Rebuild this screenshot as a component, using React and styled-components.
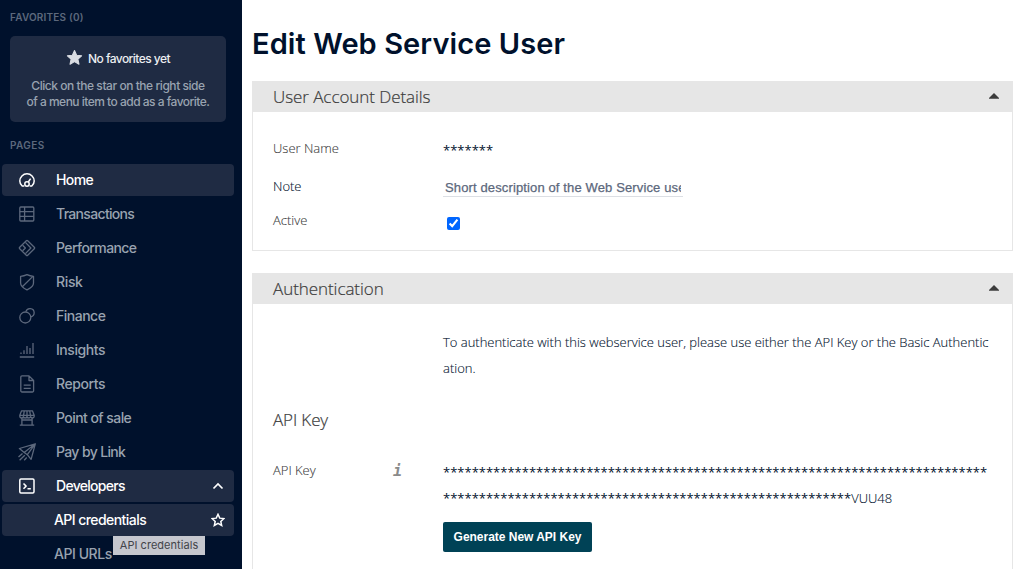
import React from "react";
import styled, { createGlobalStyle } from "styled-components";

const Global = createGlobalStyle`
  *, *::before, *::after { box-sizing: border-box; }
  body { margin: 0; background: #fff; overflow: hidden; }
`;

const Page = styled.div`
  display: flex;
  width: 1027px;
  height: 569px;
  overflow: hidden;
  font-family: "Open Sans", "Noto Sans", sans-serif;
`;

const Sidebar = styled.aside`
  flex: none;
  width: 242px;
  height: 569px;
  padding-top: 11px;
  overflow: hidden;
  background: #00112c;
  font-family: Inter, Roboto, sans-serif;
`;

const Caption = styled.h2`
  margin: 0;
  padding-left: 10px;
  height: 12px;
  line-height: 13px;
  font-size: 10px;
  font-weight: 600;
  letter-spacing: ${(p) => p.$tracking}px;
  color: #5c687c;
`;

const Favorites = styled.section`
  display: flex;
  flex-direction: column;
  align-items: center;
  width: 216px;
  height: 86px;
  margin: 13px 0 17px 10px;
  padding-top: 13px;
  border-radius: 5px;
  background: #1f2b43;
`;

const FavoritesTitle = styled.div`
  display: flex;
  align-items: center;
  gap: 5px;
  height: 20px;
  margin-bottom: 9px;
  font-size: 12px;
  font-weight: 550;
  line-height: 20px;
  letter-spacing: -0.55px;
  color: #eceef1;
  svg { margin-top: -4px; }
`;

const FavoritesHint = styled.p`
  margin: 0;
  line-height: 16px;
  font-size: 12px;
  font-weight: 450;
  text-align: center;
  white-space: nowrap;
  letter-spacing: ${(p) => p.$tracking}px;
  color: #99a3b0;
`;

const Nav = styled.nav`
  display: flex;
  flex-direction: column;
  gap: 2px;
  padding: 13px 8px 0 2px;
`;

const NavItem = styled.a`
  position: relative;
  flex: none;
  display: flex;
  align-items: center;
  height: 32px;
  padding-left: ${(p) => (p.$child ? "52px" : "15px")};
  padding-right: 8px;
  border-radius: 4px;
  background: ${(p) => (p.$active ? "#1f2b43" : "transparent")};
  color: ${(p) => (p.$active ? "#ffffff" : "#99a3b0")};
`;

const NavIcon = styled.svg`
  flex: none;
  width: 20px;
  height: 20px;
  margin-right: 19px;
  fill: none;
  stroke: ${(p) => (p.$active ? "#ffffff" : "#5c687c")};
  stroke-width: ${(p) => (p.$active ? 1.5 : 1.3)};
  stroke-linejoin: round;
`;

const NavLabel = styled.span`
  flex: 1;
  font-size: 14px;
  line-height: 20px;
  white-space: nowrap;
  font-weight: ${(p) => (p.$active ? 550 : 460)};
  letter-spacing: ${(p) => p.$tracking}px;
`;

const RowAction = styled.svg`
  flex: none;
  width: ${(p) => p.$size || 16}px;
  height: ${(p) => p.$size || 16}px;
  margin-right: ${(p) => (16 - (p.$size || 16)) / 2}px;
  fill: none;
  stroke: #fff;
  stroke-width: 1.7;
`;

const Tooltip = styled.span`
  position: absolute;
  left: 111px;
  top: 32px;
  z-index: 1;
  width: 92px;
  height: 19px;
  line-height: 19px;
  text-align: center;
  font-size: 11px;
  letter-spacing: 0.04px;
  white-space: nowrap;
  color: #424449;
  background: #c5c7ce;
`;

const Main = styled.main`
  flex: 1;
  padding: 26px 14px 0 10px;
`;

const Title = styled.h1`
  margin: 0 0 19px;
  height: 36px;
  line-height: 36px;
  font-family: Inter, sans-serif;
  font-size: 29px;
  font-weight: 600;
  letter-spacing: 0.08px;
  white-space: nowrap;
  color: #00112c;
`;

const Panel = styled.section`
  height: ${(p) => p.$height}px;
  margin-bottom: 22px;
  border: 1px solid #e6e6e6;
  border-top: 0;
`;

const PanelHeader = styled.header`
  display: flex;
  align-items: center;
  justify-content: space-between;
  height: 31px;
  margin: 0 -1px;
  padding: 0 14px 0 21px;
  background: #e6e6e6;
`;

const PanelTitle = styled.h2`
  margin: 0;
  font-size: 17px;
  line-height: 31px;
  font-weight: 300;
  letter-spacing: -0.06px;
  -webkit-text-stroke: 0.2px #3c3c3c;
  color: #3c3c3c;
`;

const Caret = styled.svg`
  width: 10px;
  height: 6px;
  margin-top: -2px;
  fill: #3c3c3c;
`;

const SubTitle = styled.h3`
  margin: 0;
  padding: 27px 0 0 20px;
  font-size: 17px;
  line-height: 24px;
  font-weight: 300;
  letter-spacing: -0.12px;
  -webkit-text-stroke: 0.2px #3c3c3c;
  color: #3c3c3c;
`;

const Field = styled.div`
  display: grid;
  grid-template-columns: 120px 50px 546px;
  padding: ${(p) => p.$top}px 0 0 20px;
`;

const Label = styled.label`
  font-size: 13px;
  line-height: 26px;
  font-weight: 300;
  -webkit-text-stroke: 0.1px currentColor;
  color: ${(p) => (p.$dark ? "#00112c" : "#3c3c3c")};
`;

const Value = styled.div`
  grid-column: 3;
  padding-top: ${(p) => (p.$masked ? 2 : 0)}px;
  height: ${(p) => p.$lines * 26}px;
  font-size: 13px;
  line-height: 26px;
  font-weight: ${(p) => (p.$masked ? 400 : 300)};
  letter-spacing: ${(p) => (p.$masked ? 0 : -0.012)}px;
  -webkit-text-stroke: ${(p) => (p.$masked ? 0 : 0.1)}px #00112c;
  white-space: nowrap;
  color: #00112c;
`;

const KeyTail = styled.span`
  font-weight: 300;
  -webkit-text-stroke: 0.1px #00112c;
`;

const NoteInput = styled.input`
  grid-column: 3;
  width: 240px;
  height: 20px;
  margin-top: 4px;
  padding: 2px 2px 1px;
  border: 0;
  border-bottom: 1px solid #dcdfe4;
  outline: 0;
  background: transparent;
  font: 13px "Liberation Sans", Arial, sans-serif;
  -webkit-text-stroke: 0.25px #5c687c;
  letter-spacing: 0.13px;
  color: #5c687c;
  &::placeholder { color: #5c687c; opacity: 1; }
`;

const Check = styled.input`
  grid-column: 3;
  width: 13px;
  height: 13px;
  margin: 10px 0 0 4px;
  accent-color: #0066ff;
`;

const Info = styled.span`
  grid-column: 2;
  padding-top: 1px;
  font: italic bold 15px/26px "DejaVu Sans Mono", monospace;
  color: #8a8a8a;
`;

const Button = styled.button`
  grid-column: 3;
  width: 149px;
  height: 30px;
  padding: 0;
  border: 0;
  border-radius: 2px;
  background: #004256;
  color: #fff;
  font: bold 12px "Liberation Sans", Arial, sans-serif;
  letter-spacing: -0.02px;
`;

const icons = {
  home: (
    <>
      <path d="M7.300 16H5.200C3.700 14.700 2.800 13 2.800 11a7.200 7.200 0 0 1 14.400 0c0 2-.9 3.700-2.400 5h-2.100" />
      <circle cx="10" cy="14" r="2.200" />
      <path d="M11.300 12 13.600 8.600" />
    </>
  ),
  transactions: (
    <>
      <rect x="2.800" y="3" width="14" height="14" rx="1" />
      <path d="M2.800 7.600h14M2.800 12.400h14M7.600 3v14" />
    </>
  ),
  performance: (
    <>
      <path d="M9.300 2.700a1 1 0 0 1 1.400 0l6.600 6.600a1 1 0 0 1 0 1.400l-6.600 6.600a1 1 0 0 1-1.400 0l-6.600-6.600a1 1 0 0 1 0-1.400z" />
      <path d="m8.400 4.400 5.500 5.600-5.500 5.600M5.600 7.200 8.400 10l-2.800 2.800" />
    </>
  ),
  risk: (
    <>
      <path d="M3.600 4.300Q7 4 10 2.600q3 1.400 6.500 1.700V11c0 3.200-3 5.300-6.500 6.900-3.500-1.600-6.400-3.700-6.400-6.900z" />
      <path d="M5.300 14.800 15.900 4.400" />
    </>
  ),
  finance: (
    <>
      <circle cx="8.300" cy="11.500" r="5.500" />
      <path d="M8.900 5.700a4.200 4.200 0 1 1 4.900 5.200" />
    </>
  ),
  insights: (
    <path d="M2.800 17h14.400M4 14v-1.500M7 14v-3.800M10 14V6M13 14V8M16 14V3" />
  ),
  reports: (
    <>
      <path d="M12 1.900H5a1.200 1.200 0 0 0-1.200 1.200v13.700A1.200 1.200 0 0 0 5 18h10.400a1.200 1.200 0 0 0 1.200-1.200V6.500zM12 1.900v4.600h4.600" />
      <path d="M6.700 11.200h7M6.700 14.300h7" />
    </>
  ),
  sale: (
    <>
      <path d="M4.600 2.800h10.800l1.800 4.400v1a1.800 1.800 0 0 1-3.600 0 1.800 1.800 0 0 1-3.600 0 1.800 1.800 0 0 1-3.600 0 1.800 1.800 0 0 1-3.600 0v-1zM2.800 7.300h14.400M7.300 2.800 6.400 8.200M12.700 2.800l.9 5.400M10 2.800v5.400" />
      <path d="M4.900 10v7M15.100 10v7M2.800 17.100h14.400M4.900 12h10.200" />
    </>
  ),
  link: (
    <>
      <path d="M18.300 1.800 2.400 6.500l4.800 3.900L18.300 1.800l-4.200 15.600-3.800-4.700-3.100-2.300M10.300 12.700l8-10.900" />
      <path d="m5.500 11.500-4 3.600M7.800 13.200l-5.200 5M9.700 15.500l-2.500 2.700" />
    </>
  ),
  developers: (
    <>
      <rect x="2.800" y="3" width="14.200" height="14" rx="1.200" />
      <path d="m6.500 7.500 2.600 2.600-2.600 2.600M10.500 12.800h3.300" />
    </>
  ),
};

const items = [
  { id: "home", label: "Home", active: true, tracking: -0.6 },
  { id: "transactions", label: "Transactions", tracking: -0.68 },
  { id: "performance", label: "Performance", tracking: -0.58 },
  { id: "risk", label: "Risk", tracking: -0.35 },
  { id: "finance", label: "Finance", tracking: -0.5 },
  { id: "insights", label: "Insights", tracking: -0.45 },
  { id: "reports", label: "Reports", tracking: -0.4 },
  { id: "sale", label: "Point of sale", tracking: -0.56 },
  { id: "link", label: "Pay by Link", tracking: -0.64 },
  { id: "developers", label: "Developers", active: true, open: true, tracking: -0.7 },
];

const STAR = "M8 1.500 10 5.900l4.700.5-3.500 3.200 1 4.700L8 11.900l-4.200 2.400 1-4.700L1.300 6.400 6 5.900z";

const CaretUp = () => (
  <Caret viewBox="0 0 10 6"><path d="M5 0 10 5v.7H0V5z" /></Caret>
);

export default function App() {
  return (
    <Page>
      <Global />
      <Sidebar>
        <Caption $tracking={0.2}>FAVORITES (0)</Caption>
        <Favorites>
          <FavoritesTitle>
            <svg width="17" height="17" viewBox="0 0 16 16" fill="#d9dce2" stroke="#d9dce2" strokeLinejoin="round"><path d={STAR} /></svg>
            No favorites yet
          </FavoritesTitle>
          <FavoritesHint $tracking={-0.45}>Click on the star on the right side</FavoritesHint>
          <FavoritesHint $tracking={-0.51}>of a menu item to add as a favorite.</FavoritesHint>
        </Favorites>
        <Caption $tracking={0.4}>PAGES</Caption>
        <Nav>
          {items.map((it) => (
            <NavItem key={it.id} $active={it.active}>
              <NavIcon viewBox="0 0 20 20" $active={it.active}>{icons[it.id]}</NavIcon>
              <NavLabel $active={it.active} $tracking={it.tracking}>{it.label}</NavLabel>
              {it.open && <RowAction viewBox="0 0 16 16"><path d="m3.500 10.500 4.500-4.500 4.500 4.500" /></RowAction>}
            </NavItem>
          ))}
          <NavItem $active $child>
            <NavLabel $active $tracking={-0.56}>API credentials</NavLabel>
            <RowAction $size={14} viewBox="0 0 16 16"><path d={STAR} /></RowAction>
            <Tooltip>API credentials</Tooltip>
          </NavItem>
          <NavItem $child>
            <NavLabel $tracking={-0.45}>API URLs</NavLabel>
          </NavItem>
        </Nav>
      </Sidebar>
      <Main>
        <Title>Edit Web Service User</Title>
        <Panel $height={170}>
          <PanelHeader><PanelTitle>User Account Details</PanelTitle><CaretUp /></PanelHeader>
          <Field $top={23}><Label>User Name</Label><Value $masked $lines={1}>*******</Value></Field>
          <Field $top={12}><Label $dark>Note</Label><NoteInput placeholder="Short description of the Web Service user" /></Field>
          <Field $top={8}><Label>Active</Label><Check type="checkbox" defaultChecked /></Field>
        </Panel>
        <Panel $height={320}>
          <PanelHeader><PanelTitle>Authentication</PanelTitle><CaretUp /></PanelHeader>
          <Field $top={25}>
            <Value $lines={2}>
              To authenticate with this webservice user, please use either the API Key or the Basic Authentic<br />ation.
            </Value>
          </Field>
          <SubTitle>API Key</SubTitle>
          <Field $top={25}>
            <Label>API Key</Label>
            <Info>i</Info>
            <Value $masked $lines={2}>
              {"*".repeat(76)}<br />{"*".repeat(57)}<KeyTail>VUU48</KeyTail>
            </Value>
          </Field>
          <Field $top={13}><Button>Generate New API Key</Button></Field>
        </Panel>
      </Main>
    </Page>
  );
}
